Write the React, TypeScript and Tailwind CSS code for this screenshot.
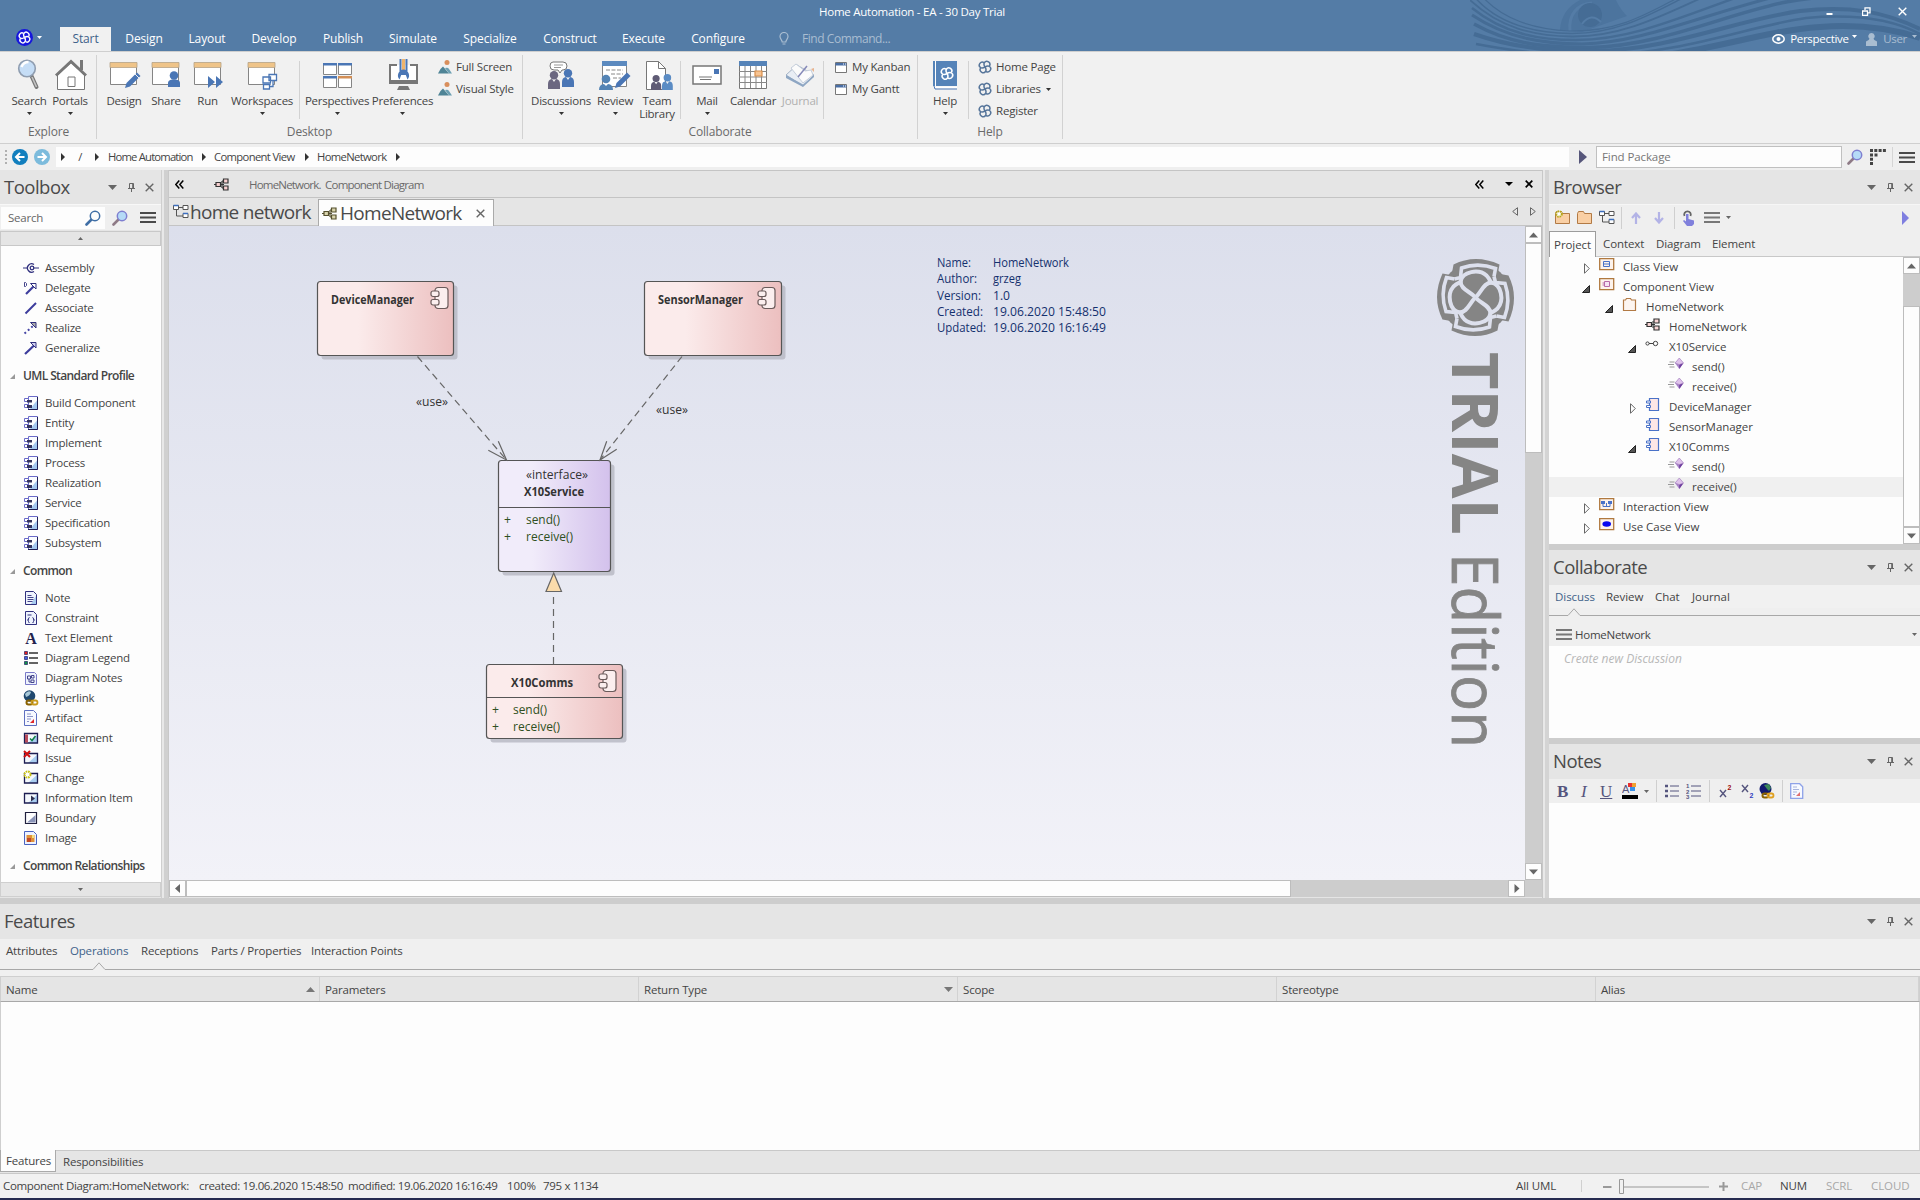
import React from "react";

type P = { children?: React.ReactNode; className?: string };

/* ---------- shared glyphs ---------- */

const Svg = ({ w, h, vb, className = "", children }: P & { w: number; h: number; vb?: string }) => (
  <svg width={w} height={h} viewBox={vb ?? `0 0 ${w} ${h}`} className={`block shrink-0 ${className}`} fill="none">
    {children}
  </svg>
);

const Caret = ({ className = "text-[#333]" }: { className?: string }) => (
  <Svg w={5} h={3} className={className}>
    <path d="M0 0h5L2.5 3z" fill="currentColor" />
  </Svg>
);

const quarter = [0, 90, 180, 270];

const KnotShape = ({ color, bg }: { color: string; bg: string }) => (
  <g>
    <circle r="35.5" fill={color} />
    {quarter.map((a) => (
      <path key={a} transform={`rotate(${a})`} d="M-24 -22L-22 -33Q0 -44 24 -33L22 -22Z" fill={color} />
    ))}
    {quarter.map((a) => (
      <path key={a} transform={`rotate(${a})`} d="M-21 -18.500L-15 -20L-14 -29.500Q3 -35.500 20 -29L18.500 -21" stroke={bg} strokeWidth="3.600" fill="none" />
    ))}
    {quarter.map((a) => (
      <path key={a} transform={`rotate(${a})`} d="M0 0C-5 -6 -15 -8 -15 -16C-13 -26 3 -29 11 -22Q15.500 -17 15.500 -13" stroke={bg} strokeWidth="4" fill="none" />
    ))}
  </g>
);

/* Four interlocked loops drawn in a 14-unit square. */
const Loops = ({ color }: { color: string }) => (
  <g transform="rotate(35 7 7)">
    {quarter.map((a) => (
      <path key={a} transform={`rotate(${a} 7 7)`} d="M7 7C5 6.200 4 5 4 3.600C4 1.800 5.400 .8 7 .8C8.800 .8 10 2 10 3.800" stroke={color} strokeWidth="1.500" />
    ))}
  </g>
);
const MiniLoops = ({ size, color }: { size: number; color: string }) => (
  <Svg w={size} h={size} vb="0 0 14 14">
    <Loops color={color} />
  </Svg>
);

const Hamburger = ({ className = "text-[#4a4a4a]" }: { className?: string }) => (
  <Svg w={16} h={11} className={className}>
    <path d="M0 1h16M0 5.500h16M0 10h16" stroke="currentColor" strokeWidth="2" />
  </Svg>
);

const Magnifier = ({ purple = false }: { purple?: boolean }) => (
  <Svg w={16} h={16}>
    <path d="M1.500 14.500L7 9" stroke={purple ? "#8e7a86" : "#3f6ea5"} strokeWidth="2.600" strokeLinecap="round" />
    <circle cx="10" cy="6" r="4.700" fill={purple ? "#b5dbf7" : "#fdfdfd"} stroke={purple ? "#7f7fd0" : "#3f6ea5"} strokeWidth="1.500" />
  </Svg>
);

const CloseX = ({ className = "text-[#666]" }: { className?: string }) => (
  <Svg w={9} h={9} className={className}>
    <path d="M.7.7l7.600 7.600M8.300.7L.7 8.300" stroke="currentColor" strokeWidth="1.400" />
  </Svg>
);

const PanelTitle = ({ children, className = "h-[35px]" }: P) => (
  <div className={`flex shrink-0 items-center bg-[#e5e5e5] pl-[4px] pr-[7px] text-[#4a4a4a] ${className}`}>
    <span className="grow pb-px text-[18.5px] leading-[24px] tracking-[-0.5px]">{children}</span>
    <Svg w={9} h={5} className="mr-[11px]">
      <path d="M0 0h9L4.500 5z" fill="#666" />
    </Svg>
    <Svg w={7} h={9} className="mr-[10px]">
      <path d="M1.500 .5h4v5h-4zM0 5.500h7M3.500 5.500V9M4.700 .5v5" stroke="#666" />
    </Svg>
    <CloseX />
  </div>
);

/* ---------- title bar ---------- */

const tabs: [string, string][] = [
  ["Design", "w-[66px]"],
  ["Layout", "w-[60px]"],
  ["Develop", "w-[74px]"],
  ["Publish", "w-[64px]"],
  ["Simulate", "w-[76px]"],
  ["Specialize", "w-[78px]"],
  ["Construct", "w-[82px]"],
  ["Execute", "w-[65px]"],
  ["Configure", "w-[84px]"],
];

const TitleBar = () => (
  <div className="relative flex h-[51px] shrink-0 flex-col overflow-hidden bg-[#547ca6] text-white">
    <svg className="absolute right-0 top-0" width="450" height="51" fill="none">
      <path d="M90 30C91 12 103 0 122 -4L145 -2C148 4 150 9 157 16L140 22L112 32Z" fill="#4c749e" />
      <path d="M100 31C98 14 108 4 122 3" stroke="#547ca6" strokeWidth="3" />
      <circle cx="120" cy="15" r="12" fill="#456c95" />
      <path d="M112 24Q121 12 131 22" stroke="#547ca6" strokeWidth="2" />
      <g stroke="#456c95">
        <path d="M10 -6C32 20 64 29 100 31C160 32 190 4 232 -14" strokeWidth="1.200" />
        <path d="M2 -6C26 24 62 33 101 33.500C162 34 200 0 248 -18" strokeWidth="1.500" />
        <path d="M0 0C30 28 64 36 102 36.500C166 37 214 2 274 -20" strokeWidth="1.800" />
        <path d="M2 8C34 34 70 40 106 40C170 40 230 8 306 -16" strokeWidth="2.400" />
        <path d="M2 15C38 39 76 44 112 44C180 43 250 6 350 -14" strokeWidth="3" />
        <path d="M4 24C44 46 80 47.500 120 47.500C190 46 256 14 316 2C350 -4 380 -6 410 -8" strokeWidth="3.500" />
        <path d="M4 34C50 50 90 51 124 51C200 50 266 20 330 11C380 5 415 12 450 29" strokeWidth="4" />
        <path d="M6 44C60 54 90 56 130 55C210 54 280 26 336 18C380 14 420 18 450 34" strokeWidth="2.500" />
        <path d="M130 60C220 60 280 32 350 27C390 24 420 28 450 38" strokeWidth="6" />
      </g>
    </svg>
    <div className="relative flex h-[26px] items-center">
      <span className="w-[1824px] pb-[2px] text-center text-[11.5px] tracking-[-0.25px]">Home Automation - EA - 30 Day Trial</span>
      <div className="absolute right-[13px] top-[7px] flex items-center">
        <Svg w={7} h={9} className="mr-[29px]">
          <path d="M.5 7h6" stroke="#fff" strokeWidth="2" />
        </Svg>
        <Svg w={9} h={9} className="mr-[27px]">
          <path d="M.5 4h5v4.500h-5zM3 3V.8h5v5H6" stroke="#fff" strokeWidth="1.300" />
        </Svg>
        <CloseX className="text-white" />
      </div>
    </div>
    <div className="relative flex h-[25px] items-stretch pt-px text-[12px] tracking-[-0.12px]">
      <div className="flex w-[60px] items-center pb-[3px] pl-[16px]">
        <div className="mr-1 flex size-[17px] items-center justify-center rounded-full bg-[#1616dc]">
          <MiniLoops size={13} color="#ffffff" />
        </div>
        <Caret className="text-white" />
      </div>
      <div className="flex w-[51px] items-center justify-center bg-[#f1f1f1] text-[#3e6289]">Start</div>
      {tabs.map(([t, w]) => (
        <div key={t} className={`flex items-center justify-center ${w}`}>
          {t}
        </div>
      ))}
      <div className="flex items-center pl-[19px] tracking-[-0.45px] text-[#a9bdd1]">
        <Svg w={10} h={14} className="mr-[13px]">
          <path d="M3.200 10C3.200 8 1 7 1 4.500a4 4 0 0 1 8 0C9 7 6.800 8 6.800 10zM3.500 12h3" stroke="#a9bdd1" strokeWidth="1.200" />
        </Svg>
        Find Command...
      </div>
      <div className="ml-auto flex items-center pr-[3px] text-[11.5px] tracking-[-0.3px]">
        <Svg w={13} h={10} className="mr-[5px]">
          <ellipse cx="6.500" cy="5" rx="5.700" ry="4.200" stroke="#fff" strokeWidth="1.500" />
          <circle cx="6.500" cy="5" r="2" fill="#fff" />
        </Svg>
        <span className="w-[57px]">Perspective</span>
        <Caret className="mb-[6px] ml-[5px] text-white" />
        <Svg w={11} h={13} className="ml-[9px] mr-[6px]">
          <path d="M5.500 0a3.200 3.200 0 0 1 2 5.700Q7.500 7 11 8.500V13H0V8.500Q3.500 7 3.500 5.700A3.200 3.200 0 0 1 5.500 0z" fill="#a9bdd1" />
        </Svg>
        <span className="text-[#a9bdd1]">User</span>
        <Caret className="mb-[6px] ml-[5px] text-[#a9bdd1]" />
      </div>
    </div>
  </div>
);

/* ---------- ribbon ---------- */

const Win = () => (
  <>
    <path d="M3.500 6v20.500h26V6" fill="#fff" stroke="#858585" />
    <path d="M3 4.500h27v5H3z" fill="#efc489" stroke="#b5a287" strokeWidth=".8" />
  </>
);
const Person = ({ x, y, c }: { x: number; y: number; c: string }) => (
  <g transform={`translate(${x} ${y})`} fill={c}>
    <circle cx="6" cy="4.200" r="4.200" />
    <path d="M0 18v-5q0-4.500 4-5l2 3 2-3q4 .5 4 5v5z" />
  </g>
);

const Big = ({ label, w, icon, caret, dim }: { label: string; w: string; icon: React.ReactNode; caret?: boolean; dim?: boolean }) => (
  <div className={`flex shrink-0 flex-col items-center pt-[6px] ${w}`}>
    <Svg w={34} h={32}>{icon}</Svg>
    <span className={`mt-[4px] w-0 text-[11.5px] leading-[13px] tracking-[-0.25px] ${dim ? "text-[#b0b0b0]" : "text-[#444]"}`}>
      {label.split("|").map((l) => (
        <span key={l} className="flex w-0 justify-center whitespace-nowrap">{l}</span>
      ))}
    </span>
    {caret && <Caret className="mt-[5px] text-[#333]" />}
  </div>
);

const VSep = () => <div className="mt-[9px] h-[58px] w-px shrink-0 bg-[#d2d2d2]" />;

const Small = ({ icon, children, caret }: P & { icon: React.ReactNode; caret?: boolean }) => (
  <div className="flex h-[22px] items-center whitespace-nowrap text-[11.5px] tracking-[-0.2px] text-[#444]">
    <span className="mr-[5px] flex w-[13px] shrink-0 justify-center">{icon}</span>
    {children}
    {caret && <Caret className="ml-[5px] text-[#333]" />}
  </div>
);

const Group = ({ label, w, children }: P & { label: string; w: string }) => (
  <div className={`flex h-[91px] shrink-0 flex-col ${w}`}>
    <div className="flex h-[71px] shrink-0">{children}</div>
    <div className="h-[18px] text-center text-[12px] leading-[18px] tracking-[-0.15px] text-[#6a6a6a]">{label}</div>
  </div>
);
const GSep = () => <div className="mt-[3px] h-[84px] w-px shrink-0 bg-[#d2d2d2]" />;

const Scenic = (
  <Svg w={14} h={14}>
    <circle cx="9" cy="2.500" r="2.500" fill="#d98f5c" />
    <path d="M0 13.500q2-5 5-7l6 7z" fill="#4f8496" />
    <path d="M7 8q3-1 4 1l3 4.500h-3z" fill="#6b9fb2" />
  </Svg>
);
const MiniWin = (
  <Svg w={12} h={11}>
    <path d="M.5.500h11v10H.5z" fill="#fff" stroke="#777" />
    <path d="M.5 1h11v2.500H.5z" fill="#4a6fa5" />
    <path d="M8 2h3" stroke="#fff" strokeDasharray="1 1" />
  </Svg>
);
const MiniKnot = <MiniLoops size={14} color="#56759a" />;

const Ribbon = () => (
  <div className="flex h-[93px] shrink-0 border-b border-t border-[#cfcfcf] bg-[#f1f1f1]">
    <Group label="Explore" w="w-[96px] pl-px">
      <div className="w-[7px]" />
      <Big label="Search" w="w-[42px]" caret icon={<>
        <path d="M19.500 18l5 11" stroke="#777" strokeWidth="4" strokeLinecap="round" />
        <path d="M20 19l4.500 10" stroke="#c4c4c4" strokeWidth="1.600" />
        <circle cx="15" cy="10.500" r="8.300" fill="#c5ddf6" stroke="#8f9db0" strokeWidth="1.600" />
        <path d="M9.500 9q2-5 7-5" stroke="#fff" strokeWidth="2.500" />
      </>} />
      <Big label="Portals" w="w-[40px]" caret icon={<>
        <path d="M4.500 17v14.500h27V17L18 4.500z" fill="#fff" stroke="#777" />
        <path d="M3 17.500L18 3.500l15 14" stroke="#777" strokeWidth="3" />
        <path d="M28.500 2v10" stroke="#777" strokeWidth="3" />
        <path d="M15 19h7v9.500h-7z" stroke="#777" />
      </>} />
    </Group>
    <GSep />
    <Group label="Desktop" w="w-[425px]">
      <div className="w-[6px]" />
      <Big label="Design" w="w-[42px]" icon={<><Win /><path d="M18 30l1.500-5L30 14.500l3.500 3.500L23 28.500z" fill="#4a76b5" /><path d="M28 16l4 4" stroke="#f1f1f1" /></>} />
      <Big label="Share" w="w-[42px]" icon={<><Win /><circle cx="25" cy="17.500" r="4.300" fill="#4a76b5" /><path d="M19 29v-4q0-3 4-3.500h4q4 .5 4 3.500v4z" fill="#4a76b5" /></>} />
      <Big label="Run" w="w-[41px]" icon={<><Win /><path d="M17 18l7 6-7 6zM25 18l7 6-7 6z" fill="#4a76b5" /></>} />
      <Big label="Workspaces" w="w-[68px]" caret icon={<><Win /><g fill="#fff" stroke="#4a76b5" strokeWidth="1.300"><path d="M24 16.500h7.500v6H24zM18 19h7.500v6H18z" /><path d="M18.500 26.500h6V31h-6zM28 22.500v6h-3.500" /></g></>} />
      <div className="w-[3px]" /><VSep /><div className="w-[4px]" />
      <Big label="Perspectives" w="w-[66px]" caret icon={<>
        {[[3, 5, "#4a76b5"], [18, 5, "#4a76b5"], [3, 18, "#4a76b5"], [18, 18, "#d38f56"]].map(([x, y, c]) => (
          <g key={`${x}-${y}`} transform={`translate(${x} ${y})`}><path d="M.5 1v10.500h13V1" fill="#fff" stroke="#858585" /><path d="M0 0h14v2.500H0z" fill={c as string} /></g>
        ))}
      </>} />
      <Big label="Preferences" w="w-[65px]" caret icon={<>
        <path d="M11 7H4v18h27V7h-7" fill="#fff" stroke="#777" strokeWidth="2" />
        <path d="M3 22h29v4H3zM13 28h9l2 4H11z" fill="#777" />
        <path d="M14.500 1v12M20.500 1v12" stroke="#4a76b5" strokeWidth="2" /><path d="M17.500 1v13" stroke="#efb46d" strokeWidth="3" />
        <path d="M17.500 11.500a6 6 0 0 0-4 10l1.700-4.500h4.600l1.700 4.500a6 6 0 0 0-4-10z" fill="#4a76b5" />
      </>} />
      <div className="flex flex-col pl-[3px] pt-[4px]">
        <Small icon={Scenic}>Full Screen</Small>
        <Small icon={Scenic}>Visual Style</Small>
      </div>
    </Group>
    <GSep />
    <Group label="Collaborate" w="w-[394px]">
      <div className="w-[7px]" />
      <Big label="Discussions" w="w-[62px]" caret icon={<>
        <path d="M9 4h10q4 0 4 4t-4 4h-1l-2 3-2-3H10q-4 0-4-4t3-4z" fill="#fff" stroke="#777" /><path d="M10 7h9M10 9.500h7" stroke="#999" />
        <Person x={4} y={13} c="#6b6780" /><Person x={18} y={11} c="#4a76b5" />
      </>} />
      <Big label="Review" w="w-[46px]" caret icon={<>
        <path d="M4.500 5v23.500h24V5" fill="#fff" stroke="#858585" /><path d="M4 3h25v5H4z" fill="#5c8abf" />
        <path d="M8 12h17M13 16h12M15 20h8" stroke="#888" strokeDasharray="4 1.500" />
        <circle cx="8" cy="21" r="4.300" fill="#5484b5" /><path d="M1 32q0-5.500 5-6l2 2 2-2q5 .5 5 6z" fill="#5484b5" />
        <path d="M17 30l1.500-5L29 14.500l3.500 3.500L22 28.500z" fill="#4a76b5" />
      </>} />
      <Big label="Team|Library" w="w-[38px]" icon={<>
        <path d="M6.500 3.500h12l7 7v21h-19z" fill="#fff" stroke="#777" /><path d="M18.500 3.500v7h7" stroke="#777" />
        <g transform="translate(22 16) scale(.9)"><Person x={0} y={0} c="#5b8cc4" /></g><g transform="translate(11 17) scale(.85)"><Person x={0} y={0} c="#5f5b75" /></g>
      </>} />
      <div className="w-[4px]" /><VSep /><div className="w-[5px]" />
      <Big label="Mail" w="w-[42px]" caret icon={<>
        <path d="M3 8h28v18H3z" fill="#fff" stroke="#777" strokeWidth="1.500" /><path d="M24 11h5v5h-5z" fill="#4a76b5" /><path d="M9 19h13M10 21.500h11" stroke="#777" strokeWidth="1.200" />
      </>} />
      <Big label="Calendar" w="w-[50px]" icon={<>
        <path d="M3.500 5h27v25.500h-27z" fill="#fff" stroke="#777" /><path d="M3 3h28v5H3z" fill="#5583b8" />
        <path d="M9 8v22M14.500 8v22M20 8v22M25.500 8v22M3 13.500h28M3 19h28M3 24.500h28" stroke="#888" />
        <path d="M19 13h7v5h-7z" fill="#f7c493" stroke="#d98f4c" strokeWidth="1.200" />
      </>} />
      <Big label="Journal" w="w-[44px]" dim icon={<>
        <path d="M3 17L14 7l17 10L20 28z" fill="#e9eef5" stroke="#a4b3c6" /><path d="M3 17v3l17 9 11-10v-2L20 26.500z" fill="#8ea6c3" />
        <path d="M8 10l5-4 9 7 6-1 2 5-10 8z" fill="#fbfbfb" stroke="#c5cedb" /><path d="M15 19l9-11" stroke="#8589b8" strokeWidth="1.500" /><path d="M28 11l3-1v4z" fill="#e8b490" />
      </>} />
      <div className="w-[1px]" /><VSep />
      <div className="flex flex-col pl-[10px] pt-[4px]">
        <Small icon={MiniWin}>My Kanban</Small>
        <Small icon={MiniWin}>My Gantt</Small>
      </div>
    </Group>
    <GSep />
    <Group label="Help" w="w-[144px]">
      <div className="w-[6px]" />
      <Big label="Help" w="w-[42px]" caret icon={<>
        <path d="M5 3h24v25H5z" fill="#5583b8" /><path d="M7.500 3v25" stroke="#fff" /><path d="M7 29.500h22" stroke="#fff" strokeWidth="2" /><path d="M6 28l1 3h22" stroke="#4a76b5" />
        <g transform="translate(12 8.500)"><Loops color="#fff" /></g>
      </>} />
      <div className="w-[2px]" /><VSep />
      <div className="flex flex-col pl-[9px] pt-[4px]">
        <Small icon={MiniKnot}>Home Page</Small>
        <Small icon={MiniKnot} caret>Libraries</Small>
        <Small icon={MiniKnot}>Register</Small>
      </div>
    </Group>
    <GSep />
  </div>
);

/* ---------- address bar ---------- */

const Tri = () => (
  <Svg w={4} h={8} className="text-[#333]">
    <path d="M0 0v8l4-4z" fill="currentColor" />
  </Svg>
);
const Nav = ({ flip, c }: { flip?: boolean; c: string }) => (
  <Svg w={16} h={16} className={flip ? "rotate-180" : ""}>
    <circle cx="8" cy="8" r="8" fill={c} />
    <path d="M12.500 8H4.500M8 4L4 8l4 4" stroke="#fff" strokeWidth="2" />
  </Svg>
);

const AddressBar = () => (
  <div className="flex h-[26px] shrink-0 items-center bg-[#efefef] text-[11.5px] text-[#444]">
    <div className="flex w-[12px] flex-col items-center gap-[2px]">
      {[0, 1, 2, 3].map((i) => <span key={i} className="size-[2px] bg-[#b0b0b0]" />)}
    </div>
    <Nav c="#127fbe" />
    <div className="w-[6px]" />
    <Nav c="#7cbbdc" flip />
    <div className="ml-[6px] flex h-[20px] w-[1513px] items-center whitespace-nowrap bg-[#fdfdfd] pl-[5px] text-[11.25px] tracking-[-0.65px]">
      <Tri />
      <span className="w-[30px] text-center">/</span>
      <Tri />
      <span className="w-[103px] pl-[9px] tracking-[-0.8px]">Home Automation</span>
      <Tri />
      <span className="w-[99px] pl-[8px]">Component View</span>
      <Tri />
      <span className="w-[87px] pl-[8px]">HomeNetwork</span>
      <Tri />
    </div>
    <Svg w={8} h={14} className="ml-[10px]"><path d="M0 0v14l8-7z" fill="#56567a" /></Svg>
    <div className="ml-[9px] flex h-[22px] w-[246px] items-center border border-[#c0c0c0] bg-[#fdfdfd] pl-[5px] tracking-[-0.1px] text-[#777]">Find Package</div>
    <div className="ml-[5px]"><Magnifier purple /></div>
    <Svg w={16} h={16} className="ml-[7px]">
      <path d="M0 1.500h16" stroke="#444" strokeWidth="3" strokeDasharray="3 1.300" />
      <path d="M1.500 4.500v12" stroke="#444" strokeWidth="3" strokeDasharray="3 1.300" />
      <path d="M4.500 6h3" stroke="#444" strokeWidth="3" />
    </Svg>
    <div className="ml-[6px] mr-[6px] h-[20px] w-px bg-[#d5d5d5]" />
    <Hamburger />
  </div>
);

/* ---------- toolbox ---------- */

const N = "#30307e";
const Doc = () => <path d="M2.500 1.500h8l3 3v10h-11z" fill="#eef3fd" stroke={N} />;
const Box = () => (
  <>
    <path d="M1 4h14v9H1z" fill="#f4f8fd" /><path d="M5 13L15 4v9z" fill="#a9cdf0" />
    <path d="M1.500 3.500h13v9.500h-13z" stroke="#1d1d52" strokeWidth="1.300" />
  </>
);
const toolIcons: Record<string, React.ReactNode> = {
  assembly: <><path d="M0 8h5M10 8h6" stroke={N} strokeWidth="1.200" /><circle cx="9" cy="8" r="1.800" stroke={N} strokeWidth="1.300" /><path d="M11 4.500a4.200 4.200 0 1 0 0 7" stroke={N} strokeWidth="1.300" /></>,
  delegate: <><path d="M3 14L11 6" stroke="#3c3c9c" strokeWidth="2.200" /><path d="M7.500 3.500H13V9z" fill="#fff" stroke={N} /><path d="M1.500 2.500h1l1 1v2l-1 1h-1z" stroke={N} strokeWidth=".9" /></>,
  associate: <path d="M2.500 13.500L13 3" stroke="#3c3c9c" strokeWidth="2" />,
  realize: <><path d="M1.500 13.500L10 6" stroke="#4444a4" strokeWidth="2" strokeDasharray="2 2.500" /><path d="M7.500 2.500H13V8z" fill="#aaa" stroke={N} /></>,
  generalize: <><path d="M2 14L11 5.500" stroke="#3c3c9c" strokeWidth="2.200" /><path d="M7.500 2.500H13V8z" fill="#cfcff0" stroke={N} /></>,
  comp: <><path d="M5.500 1.500h9v13h-9z" fill="#fafcff" stroke="#6a6ac8" /><path d="M7 14L14 5.500V14z" fill="#a4c8f0" /><path d="M5 14.500h9.500V2" stroke="#1d1d52" /><path d="M1.500 3.500h4v3h-4zM1.500 9.500h4v3h-4z" fill="#fff" stroke="#6a6ac8" /><path d="M4 5h5v2.500H4zM4 10h5v3H4z" fill="#34345e" /></>,
  note: <><Doc /><path d="M8 14h5V6z" fill="#a9cdf0" /><path d="M4.500 5.500h4M4.500 7.500h6M4.500 9.500h6M4.500 11.500h5" stroke={N} strokeWidth=".9" /></>,
  constraint: <><Doc /><path d="M4.500 5h4" stroke={N} /><path d="M6.500 7.500q-1 0-1 1.500t-1 1q1 0 1 1.500t1 1M9.500 7.500q1 0 1 1.500t1 1q-1 0-1 1.500t-1 1" stroke={N} /></>,
  text: <text x="8" y="14" textAnchor="middle" fill="#23234f" className="font-['Liberation_Serif'] text-[16px] font-bold">A</text>,
  legend: <>{["#e02020", "#4060e0", "#109048"].map((c, i) => <g key={c}><path d={`M1.500 ${1.500 + i * 5}h3v3h-3z`} fill={c} stroke="#222266" strokeWidth=".7" /><path d={`M6 ${3 + i * 5}h9`} stroke="#222" strokeWidth="1.400" /></g>)}</>,
  dnotes: <><path d="M2.500 2.500h9l2 2v10h-11z" fill="#eef3fd" stroke="#7a7ac8" /><path d="M4.500 6h3v3h-3zM8.500 5.500h2.500v2.500H8.500zM8 10h3v2.500H8zM6 9v3h2" stroke="#44448c" /></>,
  hyper: <><circle cx="6.500" cy="6" r="5.800" fill="#20486e" /><path d="M2 4q3-4 6-2-1 4-5 5z" fill="#a8c8d8" /><rect x="3.500" y="10.500" width="6" height="4" rx="2" stroke="#8a6200" strokeWidth="2" /><rect x="8.500" y="10.500" width="6" height="4" rx="2" stroke="#c99a1c" strokeWidth="1.800" /></>,
  artifact: <><path d="M1.500 .5h9l3 3v12h-12z" fill="#f7f9ff" stroke="#5d6fc0" /><path d="M4 4h4M4 6.500h6M4 9h4M4 11.500h2" stroke="#8c94c8" /><path d="M7 13l4-4v4z" fill="#e02828" /></>,
  req: <><Box /><path d="M2 4.500h3v8H2z" fill="#b84c5c" /><path d="M7 8.500l2 2L12.500 6" stroke="#108048" strokeWidth="1.500" /></>,
  issue: <><Box /><path d="M1 1l6 6M7 1L1 7" stroke="#d01010" strokeWidth="2" /></>,
  change: <><Box /><circle cx="4.500" cy="4.500" r="3" fill="#fff" stroke="#c8c010" strokeWidth="2" strokeDasharray="1.600 .8" /></>,
  info: <><Box /><path d="M8 5.500l4 3-4 3z" fill="#30304e" /></>,
  boundary: <><path d="M2.500 2.500h11v11h-11z" fill="#fff" stroke="#20203e" strokeWidth="1.200" /><path d="M4 12.500L12.500 5v7.500z" fill="#8a94b8" /></>,
  image: <><path d="M1.500 1.500h9l3 3v10h-12z" fill="#eef3ff" stroke="#4a64c0" /><path d="M3.500 5h8v7h-8z" fill="#e09038" /><path d="M4 8h4v4H4z" fill="#c04828" /><path d="M9 5h2v3H9z" fill="#f6e27c" /></>,
};

const toolGroups: { title?: string; items: [string, string][] }[] = [
  { items: [["assembly", "Assembly"], ["delegate", "Delegate"], ["associate", "Associate"], ["realize", "Realize"], ["generalize", "Generalize"]] },
  { title: "UML Standard Profile", items: ["Build Component", "Entity", "Implement", "Process", "Realization", "Service", "Specification", "Subsystem"].map((s) => ["comp", s]) },
  { title: "Common", items: [["note", "Note"], ["constraint", "Constraint"], ["text", "Text Element"], ["legend", "Diagram Legend"], ["dnotes", "Diagram Notes"], ["hyper", "Hyperlink"], ["artifact", "Artifact"], ["req", "Requirement"], ["issue", "Issue"], ["change", "Change"], ["info", "Information Item"], ["boundary", "Boundary"], ["image", "Image"]] },
  { title: "Common Relationships", items: [] },
];

const Toolbox = () => (
  <div className="flex w-[162px] shrink-0 flex-col border-r border-[#cfcfcf] bg-[#e5e5e5]">
    <PanelTitle className="h-[34px]">Toolbox</PanelTitle>
    <div className="flex h-[26px] items-center border-t border-[#f8f8f8] bg-[#efefef] pl-px">
      <div className="flex h-[22px] w-[104px] items-center justify-between bg-[#fdfdfd] pl-[7px] pr-[4px] text-[11.5px] tracking-[-0.2px] text-[#666]">
        Search <Magnifier />
      </div>
      <div className="ml-[7px] mr-[12px]"><Magnifier purple /></div>
      <Hamburger />
    </div>
    <div className="mt-px flex h-[15px] items-center justify-center border border-[#c8c8c8]">
      <Svg w={5} h={3}><path d="M0 3h5L2.500 0z" fill="#666" /></Svg>
    </div>
    <div className="h-[636px] overflow-hidden border-l border-[#cfcfcf] bg-[#fdfdfd] pt-[12px] text-[11.5px] leading-[20px] text-[#444]">
      {toolGroups.map((g, i) => (
        <div key={i}>
          {g.title && (
            <div className="flex h-[35px] items-center pl-[9px] pt-px">
              <Svg w={5} h={5} className="mr-[8px]"><path d="M0 5h5V0z" fill="#999" /></Svg>
              <span className="whitespace-nowrap text-[12px] font-[650] tracking-[-0.62px]">{g.title}</span>
            </div>
          )}
          {g.items.map(([k, t]) => (
            <div key={t} className="flex h-[20px] items-center pl-[22px]">
              <Svg w={16} h={16} className="mr-[6px]">{toolIcons[k]}</Svg>
              <span className="whitespace-nowrap tracking-[-0.22px]">{t}</span>
            </div>
          ))}
        </div>
      ))}
    </div>
    <div className="flex h-[15px] items-center justify-center border border-[#cfcfcf]">
      <Caret className="text-[#666]" />
    </div>
  </div>
);

/* ---------- diagram ---------- */

const Tx = ({ x, y, w, b, c = "#333", children }: { x: number; y: number; w: number; b?: boolean; c?: string; children: string }) => (
  <text x={x} y={y} textLength={w} lengthAdjust="spacingAndGlyphs" fill={c} className={`text-[12px] ${b ? "font-bold" : ""}`}>{children}</text>
);

const Node = ({ x, y, w, h, fill, split }: { x: number; y: number; w: number; h: number; fill: string; split?: number }) => (
  <>
    <rect x={x + 4} y={y + 4} width={w} height={h} rx="3" fill="#b9bac4" opacity=".85" />
    <rect x={x} y={y} width={w} height={h} rx="3" fill={fill} stroke="#555" strokeWidth="1.200" />
    {split && <path d={`M${x} ${split}h${w}`} stroke="#555" strokeWidth="1.200" />}
  </>
);
const CompGlyph = ({ x, y }: { x: number; y: number }) => (
  <g transform={`translate(${x} ${y})`} stroke="#6a5a5a" strokeWidth="1.200" fill="#fbeeee">
    <rect x="4" y="0" width="13" height="21" rx="3" />
    <rect x="0" y="3.500" width="8" height="5.500" rx="2" />
    <rect x="0" y="12" width="8" height="5.500" rx="2" />
  </g>
);

const info: [string, number, string, number][] = [
  ["Name:", 34, "HomeNetwork", 76],
  ["Author:", 40, "grzeg", 28],
  ["Version:", 44, "1.0", 17],
  ["Created:", 46, "19.06.2020 15:48:50", 113],
  ["Updated:", 49, "19.06.2020 16:16:49", 113],
];

const Canvas = () => (
  <svg width="1356" height="654" viewBox="169 226 1356 654" className="block shrink-0 bg-linear-to-b from-[#dcdfec] to-[#f2f2f8]" fill="none">
    <defs>
      <linearGradient id="pink"><stop offset=".3" stopColor="#fbebeb" /><stop offset="1" stopColor="#ecbfbf" /></linearGradient>
      <linearGradient id="violet"><stop offset=".3" stopColor="#f1ecfa" /><stop offset="1" stopColor="#d3c1ec" /></linearGradient>
    </defs>
    <Node x={317.500} y={281.500} w={136} h={74} fill="url(#pink)" />
    <Node x={644.500} y={281.500} w={137} h={74} fill="url(#pink)" />
    <Node x={498.500} y={460.500} w={112} h={111} fill="url(#violet)" split={507.500} />
    <Node x={486.500} y={664.500} w={136} h={74} fill="url(#pink)" split={697.500} />
    <CompGlyph x={431} y={287.500} />
    <CompGlyph x={758} y={287.500} />
    <CompGlyph x={599} y={670.500} />
    <Tx x={331} y={304} w={83} b>DeviceManager</Tx>
    <Tx x={658} y={304} w={85} b>SensorManager</Tx>
    <Tx x={526} y={479} w={62}>«interface»</Tx>
    <Tx x={524} y={496} w={60} b>X10Service</Tx>
    <Tx x={511} y={687} w={62} b>X10Comms</Tx>
    <Tx x={416} y={406} w={32}>«use»</Tx>
    <Tx x={656} y={414} w={32}>«use»</Tx>
    {[[504, 526, 524], [492, 513, 714]].map(([p, t, y]) => (
      <g key={p}>
        <Tx x={p} y={y} w={7} c="#2f5022">+</Tx>
        <Tx x={t} y={y} w={34} c="#2f5022">send()</Tx>
        <Tx x={p} y={y + 17} w={7} c="#2f5022">+</Tx>
        <Tx x={t} y={y + 17} w={47} c="#2f5022">receive()</Tx>
      </g>
    ))}
    <g stroke="#666" strokeWidth="1.200">
      <path d="M417.500 356.500L506.500 460M682 356.500L600 460" strokeDasharray="7 4.500" />
      <path d="M498.300 441.300L506.500 460L488.300 450.300M606.700 441.300L600 460L616.700 449.300" />
      <path d="M553.500 664V593" strokeDasharray="7 5" />
      <path d="M553.700 573L561.500 591.500H546z" fill="#fbdcab" />
    </g>
    {info.map(([k, kw, v, vw], i) => (
      <g key={k}>
        <Tx x={937} y={267 + i * 16.300} w={kw} c="#14306e">{k}</Tx>
        <Tx x={993} y={267 + i * 16.300} w={vw} c="#14306e">{v}</Tx>
      </g>
    ))}
    <g transform="translate(1475.500 297.500)"><KnotShape color="#858585" bg="#dde0ed" /></g>
    <g transform="translate(1451.500 0) rotate(90)" fill="#858585" className="text-[64px]">
      <text x="352" y="0" textLength="183" lengthAdjust="spacingAndGlyphs" className="font-bold">TRIAL</text>
      <text x="553" y="0" textLength="195" lengthAdjust="spacingAndGlyphs" stroke="#858585" strokeWidth=".8">Edition</text>
    </g>
  </svg>
);

const ScrollBtn = ({ dir }: { dir: "up" | "down" | "left" | "right" }) => {
  const d = { up: "M3 10.500h9L7.500 5.500z", down: "M3 5.500h9l-4.500 5z", left: "M10 3v9L5 7.500z", right: "M5.500 3v9l5-4.500z" }[dir];
  return (
    <div className="size-[17px] shrink-0 border border-[#bdbdbd] bg-[#fdfdfd]">
      <Svg w={15} h={15}><path d={d} fill="#666" /></Svg>
    </div>
  );
};

const DiaIcon = ({ c, s }: { c: string; s: string }) => (
  <Svg w={15} h={13}>
    <path d="M0 6.500h2M7 6.500h3M8 3v7M8 3h2M8 10h2" stroke={s} strokeWidth="1.200" />
    <path d="M2 4.500h4.500V8.500H2zM9.500 1h4.500v4H9.500zM9.500 8h4.500v4H9.500z" fill={c} stroke={s} strokeWidth="1.200" />
  </Svg>
);
const TreeDia = () => (
  <Svg w={16} h={15}>
    <path d="M3.500 5v7H10M6 3.500h4" stroke="#555" />
    <path d="M.5 1.500h5v4h-5zM10 1.500h5v4h-5zM10 9.500h5v4h-5z" fill="#fff" stroke="#555" />
    <path d="M.5 1.500h5M10 9.500h5" stroke="#3d6fc0" strokeWidth="1.600" />
  </Svg>
);

const Chevs = () => (
  <Svg w={9} h={9}><path d="M4.300 .5l-3.500 4 3.500 4M8.300 .5l-3.500 4 3.500 4" stroke="#000" strokeWidth="1.500" /></Svg>
);

const Diagram = () => (
  <div className="flex w-[1375px] shrink-0 flex-col border-l border-r border-[#c8c8c8] bg-[#e5e5e5]">
    <div className="flex h-[28px] shrink-0 items-center border-b border-t border-[#c4c4c4] pl-[6px] pr-[9px] text-[#6a6a6a]">
      <Chevs />
      <div className="ml-[30px] mr-[20px]"><DiaIcon c="#f7cfcf" s="#333" /></div>
      <span className="grow whitespace-pre pt-[2px] text-[11.5px] tracking-[-0.8px]">HomeNetwork.  Component Diagram</span>
      <Chevs />
      <Svg w={8} h={4} className="ml-[21px] mr-[12px]"><path d="M0 0h8L4 4z" fill="#000" /></Svg>
      <Svg w={8} h={8}><path d="M.7.7l6.600 6.600M7.300.7L.7 7.300" stroke="#000" strokeWidth="1.700" /></Svg>
    </div>
    <div className="flex h-[28px] shrink-0 border-b border-[#c4c4c4] text-[19px] leading-[28px] tracking-[-0.7px] text-[#4a4a4a]">
      <div className="flex w-[149px] items-center whitespace-nowrap pl-[4px]">
        <TreeDia />
        <span className="ml-[1px]">home network</span>
      </div>
      <div className="mt-px flex h-[27px] w-[176px] items-center border-l border-r border-t border-[#aaa] bg-[#fdfdfd] pl-[3px]">
        <DiaIcon c="#d8d3ac" s="#55502e" />
        <span className="ml-[3px] grow">HomeNetwork</span>
        <span className="mr-[8px]"><CloseX /></span>
      </div>
      <div className="ml-auto flex items-center gap-[12px] pr-[6px]">
        <Svg w={6} h={9}><path d="M5.500 .7v7.600L.7 4.500z" stroke="#666" /></Svg>
        <Svg w={6} h={9}><path d="M.5 .7v7.600l4.800-3.800z" stroke="#666" /></Svg>
      </div>
    </div>
    <div className="flex h-[654px] shrink-0">
      <Canvas />
      <div className="flex w-[17px] flex-col bg-[#cdcdcd]">
        <ScrollBtn dir="up" />
        <div className="h-[210px] border border-[#bdbdbd] bg-[#fdfdfd]" />
        <div className="mt-auto"><ScrollBtn dir="down" /></div>
      </div>
    </div>
    <div className="flex h-[17px] shrink-0 bg-[#cdcdcd]">
      <ScrollBtn dir="left" />
      <div className="h-[17px] w-[1105px] border border-[#bdbdbd] bg-[#fdfdfd]" />
      <div className="ml-auto mr-[17px]"><ScrollBtn dir="right" /></div>
    </div>
  </div>
);

/* ---------- right column ---------- */

const Folder = ({ c = "#f9cfa4" }: { c?: string }) => <path d="M.5 13.500V3.500l1-2h5l1 2h7v10z" fill={c} stroke="#b27a45" />;
const ViewBox = ({ children }: P) => (<><path d="M.7 1.700h14v11H.7z" fill="#fdf3ec" stroke="#b0793f" strokeWidth="1.300" />{children}</>);

const treeIcons: Record<string, React.ReactNode> = {
  cls: <ViewBox><path d="M4.500 4.500h6v5h-6zM4.500 7h6" stroke="#4a72c8" /></ViewBox>,
  cmp: <ViewBox><path d="M5.500 4.500h5v5h-5zM3.500 6h2M3.500 8h2" stroke="#b66aa8" fill="#f5e3f3" /></ViewBox>,
  fld: <path d="M1.500 13.500V3h2l1-1.500h4L9.500 3h4v10.500z" fill="#fdf5f0" stroke="#b27a45" strokeWidth="1.200" />,
  dia: <g transform="translate(0 1)"><path d="M0 6.500h2M7 6.500h3M8 3v7" stroke="#333" /><path d="M2 4.500h4.500V8.500H2zM9 1h5v4H9zM9 8h5v4H9z" fill="#f9d5d5" stroke="#333" strokeWidth="1.200" /></g>,
  itf: <><circle cx="2.500" cy="6.500" r="1.600" stroke="#444" /><circle cx="10.500" cy="6.500" r="2.200" stroke="#444" /><path d="M4 6.500h4.500" stroke="#444" /></>,
  op: <><path d="M1.500 5h5M0 7.500h6M1.500 10h5" stroke="#999" /><path d="M7 6l4.300-5L15.500 6 11.300 12z" fill="#a983c8" /><path d="M11.300 7.500l4.200-1.500-4.200 6z" fill="#6c3c9c" /><path d="M7 6l4.300-5L15.500 6l-4.200 1.500z" fill="#e0c3ec" stroke="#a080b8" strokeWidth=".5" /></>,
  co: <><path d="M4.500 1.500h9v12h-9z" fill="#fde6e6" stroke="#4a72c8" strokeWidth="1.200" /><path d="M1.500 4h4v2h-4zM1.500 8.500h4v2h-4z" fill="#fff" stroke="#4a72c8" /></>,
  int: <ViewBox><path d="M2 4h4v3H2zM9 4h4v3H9z" fill="#4a72c8" /><path d="M4 7v2.500h7V7M7.500 6v3.500" stroke="#4a72c8" /></ViewBox>,
  use: <ViewBox><ellipse cx="7.700" cy="7" rx="4.300" ry="2.700" fill="#0808f0" /></ViewBox>,
};
const indents = ["w-[35px]", "w-[58px]", "w-[81px]", "w-[104px]"];
const tree: [number, string, string, string][] = [
  [0, "c", "cls", "Class View"],
  [0, "o", "cmp", "Component View"],
  [1, "o", "fld", "HomeNetwork"],
  [2, "", "dia", "HomeNetwork"],
  [2, "o", "itf", "X10Service"],
  [3, "", "op", "send()"],
  [3, "", "op", "receive()"],
  [2, "c", "co", "DeviceManager"],
  [2, "", "co", "SensorManager"],
  [2, "o", "co", "X10Comms"],
  [3, "", "op", "send()"],
  [3, "sel", "op", "receive()"],
  [0, "c", "int", "Interaction View"],
  [0, "c", "use", "Use Case View"],
];

const TSep = () => <div className="h-[22px] w-px shrink-0 bg-[#cfcfcf]" />;

const Browser = () => (
  <>
    <PanelTitle className="h-[34px]">Browser</PanelTitle>
    <div className="flex h-[26px] shrink-0 items-center border-t border-[#f6f6f6] bg-[#efefef] pl-[6px]">
      <Svg w={16} h={16} className="mr-[6px]"><Folder /><circle cx="4" cy="4" r="2.800" fill="#fff" stroke="#b5a818" strokeWidth="2" strokeDasharray="1.500 .8" /></Svg>
      <Svg w={16} h={16} className="mr-[6px]"><Folder /></Svg>
      <TreeDia />
      <div className="w-[6px]" /><TSep />
      <Svg w={10} h={12} className="ml-[9px]"><path d="M5 12V2M1 6l4-4.500L9 6" stroke="#b3b3e6" strokeWidth="2.200" /></Svg>
      <Svg w={10} h={12} className="ml-[13px] mr-[10px]"><path d="M5 0v10M1 6l4 4.500L9 6" stroke="#b3b3e6" strokeWidth="2.200" /></Svg>
      <TSep />
      <Svg w={14} h={16} className="ml-[7px]"><path d="M2.500 6a3.300 3.300 0 1 1 6 0" stroke="#666" strokeWidth="1.800" /><path d="M4 4h2.500v5l5.500 1.500V14l-2 2H5L1 11l1-1 2 1.500z" fill="#8080dc" /></Svg>
      <div className="ml-[8px]"><Hamburger className="text-[#777]" /></div>
      <Caret className="ml-[6px] text-[#666]" />
      <Svg w={7} h={14} className="ml-auto mr-[11px]"><path d="M0 0v14l7-7z" fill="#7f7fe0" /></Svg>
    </div>
    <div className="flex h-[27px] shrink-0 items-end border-b border-[#c8c8c8] text-[11.5px] tracking-[-0.1px] text-[#444]">
      <div className="-mb-px flex h-[26px] w-[47px] items-center justify-center border border-b-0 border-[#9c9c9c] bg-[#fdfdfd] pt-px">Project</div>
      <span className="flex h-[26px] w-[53px] items-center pl-[7px] pt-px">Context</span>
      <span className="flex h-[26px] w-[56px] items-center pl-[7px] pt-px">Diagram</span>
      <span className="flex h-[26px] items-center pl-[7px] pt-px">Element</span>
    </div>
    <div className="flex h-[287px] shrink-0 bg-[#fdfdfd]">
      <div className="flex grow flex-col text-[11.5px] tracking-[-0.05px] text-[#444]">
        {tree.map(([lvl, st, ic, t], i) => (
          <div key={i} className={`flex h-[20px] items-center ${st === "sel" ? "bg-[#f0f0f0]" : ""}`}>
            <div className={`${indents[lvl]} flex shrink-0`} />
            <div className="w-[15px] shrink-0 pt-[3px]">
              {st === "o" && <Svg w={8} h={8} className="-ml-[2px]"><path d="M.500 7.500h7v-7z" fill="#555" stroke="#222" /></Svg>}
              {st === "c" && <Svg w={6} h={11}><path d="M.5 .7v9.600l4.800-4.800z" stroke="#666" /></Svg>}
            </div>
            <Svg w={16} h={16} className="mb-[4px] mr-[8px]">{treeIcons[ic]}</Svg>
            <span>{t}</span>
          </div>
        ))}
      </div>
      <div className="flex w-[17px] shrink-0 flex-col bg-[#cdcdcd]">
        <ScrollBtn dir="up" />
        <div className="mt-[32px] h-[221px] border border-[#bdbdbd] bg-[#fdfdfd]" />
        <ScrollBtn dir="down" />
      </div>
    </div>
  </>
);

const NotchLine = ({ className }: { className: string }) => (
  <div className="flex h-[8px] shrink-0">
    <div className={`border-b border-[#a8a8a8] ${className}`} />
    <Svg w={12} h={8}><path d="M0 7.500L6 .8l6 6.700" stroke="#a8a8a8" /></Svg>
    <div className="grow border-b border-[#a8a8a8]" />
  </div>
);

const Gap = () => <div className="h-[6px] shrink-0 bg-[#cdcdcd]" />;

const RightColumn = () => (
  <div className="flex w-[371px] shrink-0 flex-col bg-[#efefef]">
    <Browser />
    <Gap />
    <PanelTitle>Collaborate</PanelTitle>
    <div className="flex h-[23px] shrink-0 items-center bg-[#f1f1f1] pl-[6px] pt-px text-[11.5px] tracking-[-0.05px] text-[#444]">
      <span className="w-[51px] text-[#3e6289]">Discuss</span>
      <span className="w-[49px]">Review</span>
      <span className="w-[37px]">Chat</span>
      <span>Journal</span>
    </div>
    <NotchLine className="w-[19px]" />
    <div className="flex h-[30px] shrink-0 items-center pl-[7px] pr-px pt-[7px] text-[11.5px] tracking-[-0.25px] text-[#444]">
      <Hamburger className="mr-[3px] text-[#777]" />
      <span className="grow leading-[15px]">HomeNetwork</span>
      <Caret className="mr-[2px] text-[#666]" />
    </div>
    <div className="h-[92px] shrink-0 bg-[#fdfdfd] pl-[15px] pt-[4px] text-[12px] italic text-[#b8b8b8]">Create new Discussion</div>
    <Gap />
    <PanelTitle>Notes</PanelTitle>
    <div className="flex h-[24px] shrink-0 items-center bg-[#efefef] pl-[8px] font-['Liberation_Serif'] text-[17px] leading-none text-[#55557e]">
      <span className="w-[24px] font-bold">B</span>
      <span className="w-[19px] italic">I</span>
      <span className="w-[22px] underline">U</span>
      <Svg w={16} h={16}><text x="0" y="10" fill="#55557e" className="font-['Liberation_Sans'] text-[11px]">A</text><path d="M6 0h4v4H6z" fill="#e83030" /><path d="M10 0h4v4h-4z" fill="#f0a030" /><path d="M8 4h5v4H8z" fill="#3890e8" /><path d="M0 12h16v4H0z" fill="#000" /></Svg>
      <Caret className="ml-[6px] mr-[7px] text-[#666]" />
      <TSep />
      <Svg w={14} h={14} className="ml-[8px]"><path d="M0 2h3M0 7h3M0 12h3" stroke="#55557e" strokeWidth="2.500" /><path d="M5 2h9M5 7h9M5 12h9" stroke="#55557e" /></Svg>
      <Svg w={15} h={16} className="ml-[7px] mr-[8px]"><g fill="#55557e" className="font-['Liberation_Sans'] text-[6px] font-bold"><text x="0" y="5">1</text><text x="0" y="10.500">2</text><text x="0" y="16">3</text></g><path d="M5 3h10M5 8h10M5 13h10" stroke="#55557e" /></Svg>
      <TSep />
      <Svg w={13} h={14} className="ml-[9px]"><path d="M1 6l6 7M7 6l-6 7" stroke="#55557e" strokeWidth="1.400" /><text x="8.500" y="6" fill="#a01010" className="font-['Liberation_Sans'] text-[7px] font-bold">2</text></Svg>
      <Svg w={13} h={14} className="ml-[9px]"><path d="M1 1l6 7M7 1L1 8" stroke="#55557e" strokeWidth="1.400" /><text x="8.500" y="13.500" fill="#3040c0" className="font-['Liberation_Sans'] text-[7px] font-bold">2</text></Svg>
      <Svg w={16} h={16} className="ml-[5px] mr-[7px]"><circle cx="6.500" cy="6" r="6" fill="#121a6e" /><path d="M5 2l5-1 2 4-2 3-2-2z" fill="#3c8858" /><rect x="3.500" y="10.500" width="6" height="4" rx="2" stroke="#8a6200" strokeWidth="2" /><rect x="8.500" y="10.500" width="6" height="4" rx="2" stroke="#e0a020" strokeWidth="1.800" /></Svg>
      <TSep />
      <Svg w={14} h={16} className="ml-[7px]"><path d="M.7.700h9l3 3v11.600h-12z" fill="#f7f9ff" stroke="#8ea2e8" strokeWidth="1.300" /><path d="M3 4h4M3 6.500h6M3 9h4M3 11.500h2" stroke="#a8b4dc" /><path d="M6 13l4-4v4z" fill="#e07070" /></Svg>
    </div>
    <div className="h-[95px] shrink-0 bg-[#fdfdfd]" />
    <Gap />
  </div>
);

/* ---------- features ---------- */

const cols: [string, string, string][] = [
  ["Name", "w-[319px]", "up"],
  ["Parameters", "w-[319px]", ""],
  ["Return Type", "w-[319px]", "down"],
  ["Scope", "w-[319px]", ""],
  ["Stereotype", "w-[319px]", ""],
  ["Alias", "grow", ""],
];

const Features = () => (
  <div className="flex h-[270px] shrink-0 flex-col bg-[#f0f0f0] text-[11.5px] tracking-[-0.18px] text-[#444]">
    <PanelTitle>Features</PanelTitle>
    <div className="flex h-[23px] shrink-0 items-center whitespace-nowrap pl-[6px] pt-px">
      <span className="w-[64px]">Attributes</span>
      <span className="w-[71px] text-[#3e6289]">Operations</span>
      <span className="w-[70px]">Receptions</span>
      <span className="w-[100px]">Parts / Properties</span>
      <span>Interaction Points</span>
    </div>
    <NotchLine className="w-[93px]" />
    <div className="mt-[6px] flex h-[26px] shrink-0 items-stretch border border-[#cfcfcf] border-b-[#a8a8a8] bg-[#e5e5e5]">
      {cols.map(([c, w, s]) => (
        <div key={c} className={`flex items-center border-r border-[#d2d2d2] pl-[5px] pr-[4px] pt-px ${w}`}>
          <span className="grow">{c}</span>
          {s && <Svg w={9} h={5} className={s === "up" ? "rotate-180" : ""}><path d="M0 0h9L4.500 5z" fill="#777" /></Svg>}
        </div>
      ))}
    </div>
    <div className="h-[148px] shrink-0 border-l border-r border-[#cfcfcf] bg-[#fdfdfd]" />
    <div className="flex h-[24px] shrink-0 items-start border-b border-t border-[#c8c8c8] bg-[#e5e5e5]">
      <div className="-mt-px flex h-[22px] w-[56px] items-center border border-t-0 border-[#aaa] bg-[#fdfdfd] pl-[5px]">Features</div>
      <span className="pl-[7px] pt-[2px]">Responsibilities</span>
    </div>
  </div>
);

const StatusBar = () => (
  <div className="flex h-[24px] shrink-0 items-center whitespace-nowrap bg-[#f1f1f1] pl-[3px] text-[11.5px] tracking-[-0.1px] text-[#444]">
    <span className="w-[196px] tracking-[-0.35px]">Component Diagram:HomeNetwork:</span>
    <span className="w-[149px] tracking-[-0.35px]">created: 19.06.2020 15:48:50</span>
    <span className="w-[159px] tracking-[-0.4px]">modified: 19.06.2020 16:16:49</span>
    <span className="w-[36px]">100%</span>
    <span className="tracking-[-0.3px]">795 x 1134</span>
    <span className="ml-auto w-[65px]">All UML</span>
    <div className="mr-[21px] h-[12px] w-px bg-[#d0d0d0]" />
    <Svg w={9} h={9}><path d="M0 5h8.500" stroke="#999" strokeWidth="2" /></Svg>
    <Svg w={90} h={15} className="ml-[7px] mr-[10px]"><path d="M5 8h85" stroke="#999" /><path d="M.5 .5h4v14h-4z" fill="#f1f1f1" stroke="#999" /></Svg>
    <Svg w={9} h={9} className="mr-[13px]"><path d="M0 4.500h9M4.500 0v9" stroke="#999" strokeWidth="2" /></Svg>
    <span className="w-[39px] text-[#a8a8a8]">CAP</span>
    <span className="w-[46px]">NUM</span>
    <span className="w-[45px] text-[#a8a8a8]">SCRL</span>
    <span className="w-[49px] text-[#a8a8a8]">CLOUD</span>
  </div>
);

export default function App() {
  return (
    <div className="flex h-[1200px] w-[1920px] flex-col overflow-hidden bg-[#e5e5e5] font-['Open_Sans','Noto_Sans',sans-serif] text-[12px]">
      <TitleBar />
      <Ribbon />
      <AddressBar />
      <div className="flex h-[728px] shrink-0">
        <Toolbox />
        <div className="w-[6px] shrink-0 border-l-2 border-[#e8e8e8] bg-[#d0d0d0]" />
        <Diagram />
        <div className="w-[6px] shrink-0 border-l-2 border-[#e8e8e8] bg-[#d4d4d4]" />
        <RightColumn />
      </div>
      <div className="h-[6px] shrink-0 bg-[#cdcdcd]" />
      <Features />
      <StatusBar />
      <div className="h-[2px] shrink-0 bg-[#262b50]" />
    </div>
  );
}
